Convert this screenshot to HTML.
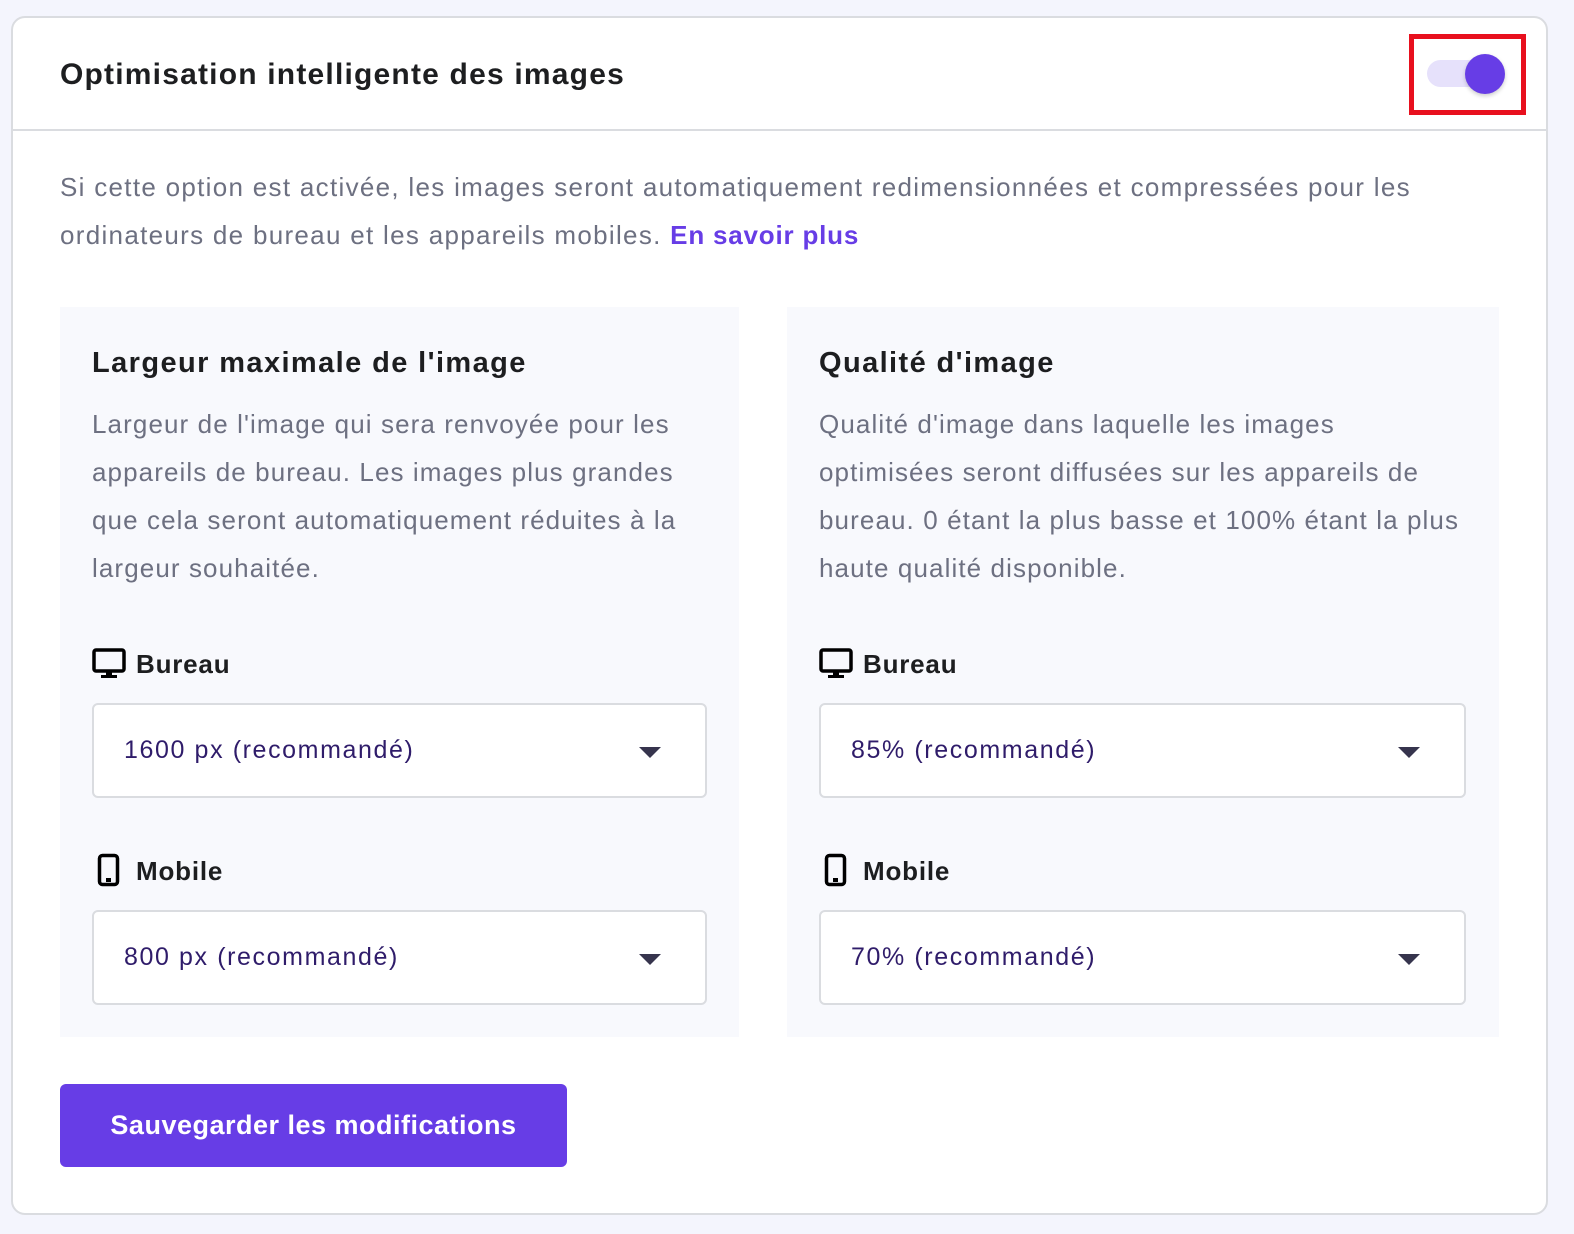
<!DOCTYPE html><html><head><meta charset="utf-8"><style>
*{margin:0;padding:0;box-sizing:border-box}
body{width:1574px;height:1234px;background:#f4f5fd;font-family:"Liberation Sans",sans-serif;position:relative;overflow:hidden;color:#1d1e20}
.a{position:absolute}
.card{left:11px;top:16px;width:1537px;height:1199px;background:#fff;border:2px solid #dadce0;border-radius:14px}
.t{font-size:29px;font-weight:bold;white-space:nowrap;letter-spacing:1.4px}
.g{color:#6d7081;font-size:26px;line-height:48px;white-space:nowrap;letter-spacing:1.1px}
.panel{background:#f8f9fd}
.sel{background:#fff;border:2px solid #dadce0;border-radius:6px;height:95px}
.sel span{position:absolute;left:30px;top:31px;font-size:25px;color:#2f1c6a;letter-spacing:1.6px}
.sel i{position:absolute;right:44px;top:42px;border-left:11px solid transparent;border-right:11px solid transparent;border-top:11px solid #36344d}
.lb{font-size:26px;font-weight:bold;letter-spacing:0.8px}
</style></head><body>
<div class="a card"></div>
<div class="a t" style="left:60px;top:58px;font-size:30px;letter-spacing:1.2px">Optimisation intelligente des images</div>
<div class="a" style="left:12px;top:129px;width:1535px;height:2px;background:#dadce0"></div>
<div class="a" style="left:1409px;top:34px;width:117px;height:81px;border:5px solid #e8101e"></div>
<div class="a" style="left:1427px;top:60px;width:70px;height:27px;border-radius:14px;background:#e6e1fb"></div>
<div class="a" style="left:1465px;top:54px;width:40px;height:40px;border-radius:50%;background:#673de6;box-shadow:0 2px 4px rgba(0,0,0,.2)"></div>
<div class="a g" style="left:60px;top:163px;letter-spacing:1.3px">Si cette option est activée, les images seront automatiquement redimensionnées et compressées pour les<br>ordinateurs de bureau et les appareils mobiles. <b style="color:#673de6;letter-spacing:0.8px">En savoir plus</b></div>

<div class="a panel" style="left:60px;top:307px;width:679px;height:730px"></div>
<div class="a panel" style="left:787px;top:307px;width:712px;height:730px"></div>

<div class="a t" style="left:92px;top:347px">Largeur maximale de l'image</div>
<div class="a g" style="left:92px;top:400px">Largeur de l'image qui sera renvoyée pour les<br>appareils de bureau. Les images plus grandes<br>que cela seront automatiquement réduites à la<br>largeur souhaitée.</div>
<div class="a t" style="left:819px;top:347px">Qualité d'image</div>
<div class="a g" style="left:819px;top:400px">Qualité d'image dans laquelle les images<br>optimisées seront diffusées sur les appareils de<br>bureau. 0 étant la plus basse et 100% étant la plus<br>haute qualité disponible.</div>

<svg class="a" style="left:92px;top:648px" width="34" height="32" viewBox="0 0 34 32"><rect x="2" y="2" width="30" height="21" rx="2" fill="none" stroke="#000" stroke-width="3.5"/><rect x="14" y="23" width="6" height="5" fill="#000"/><rect x="9" y="27" width="16" height="3" fill="#000"/></svg>
<div class="a lb" style="left:136px;top:649px">Bureau</div>
<svg class="a" style="left:819px;top:648px" width="34" height="32" viewBox="0 0 34 32"><rect x="2" y="2" width="30" height="21" rx="2" fill="none" stroke="#000" stroke-width="3.5"/><rect x="14" y="23" width="6" height="5" fill="#000"/><rect x="9" y="27" width="16" height="3" fill="#000"/></svg>
<div class="a lb" style="left:863px;top:649px">Bureau</div>

<div class="a sel" style="left:92px;top:703px;width:615px"><span>1600 px (recommandé)</span><i></i></div>
<div class="a sel" style="left:819px;top:703px;width:647px"><span>85% (recommandé)</span><i></i></div>

<svg class="a" style="left:97px;top:853px" width="24" height="34" viewBox="0 0 24 34"><rect x="2.5" y="2.5" width="18" height="29" rx="3" fill="none" stroke="#000" stroke-width="3.5"/><rect x="9" y="25" width="5" height="4" fill="#000"/></svg>
<div class="a lb" style="left:136px;top:856px">Mobile</div>
<svg class="a" style="left:824px;top:853px" width="24" height="34" viewBox="0 0 24 34"><rect x="2.5" y="2.5" width="18" height="29" rx="3" fill="none" stroke="#000" stroke-width="3.5"/><rect x="9" y="25" width="5" height="4" fill="#000"/></svg>
<div class="a lb" style="left:863px;top:856px">Mobile</div>

<div class="a sel" style="left:92px;top:910px;width:615px"><span>800 px (recommandé)</span><i></i></div>
<div class="a sel" style="left:819px;top:910px;width:647px"><span>70% (recommandé)</span><i></i></div>

<div class="a" style="left:60px;top:1084px;width:507px;height:83px;background:#673de6;border-radius:6px;color:#fff;font-size:27px;font-weight:bold;text-align:center;line-height:83px;letter-spacing:0.5px">Sauvegarder les modifications</div>
</body></html>
